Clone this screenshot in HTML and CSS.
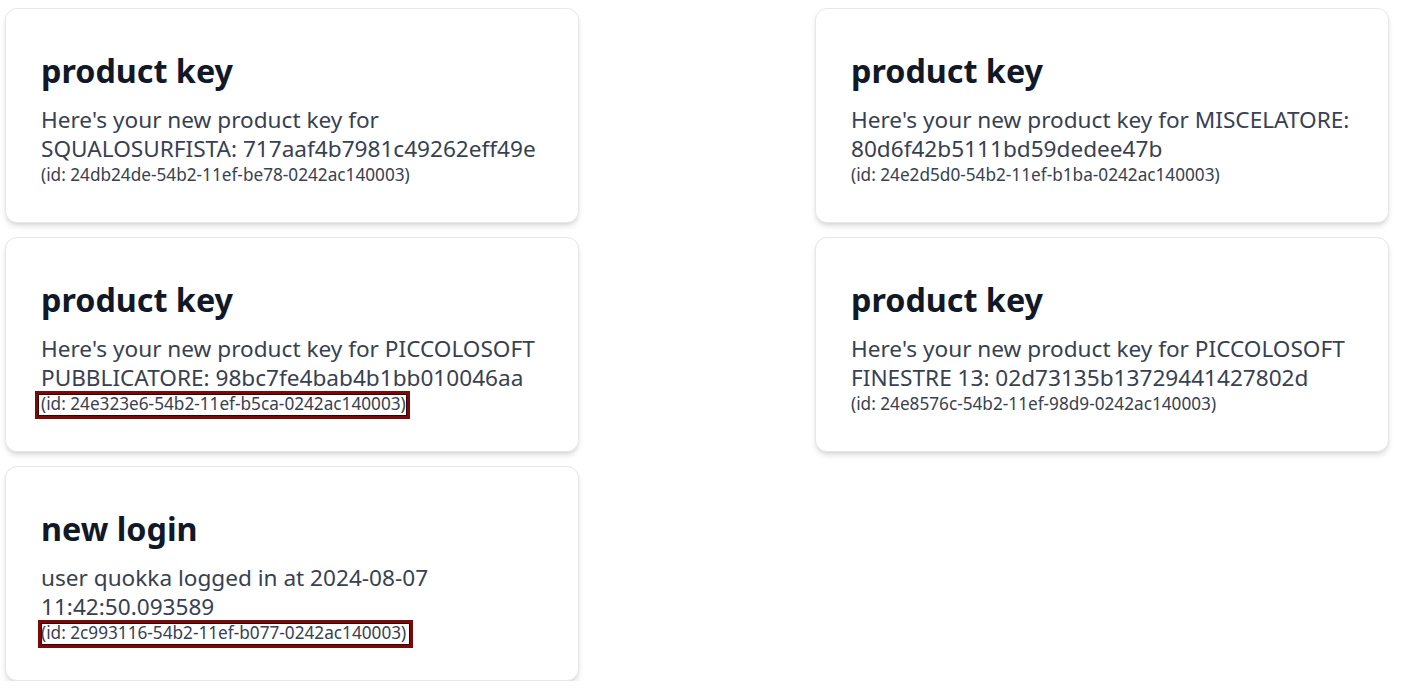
FILE: index.html
```html
<!DOCTYPE html>
<html lang="en">
<head>
<meta charset="utf-8">
<title>Notifications</title>
<link rel="stylesheet" href="styles.css">
</head>
<body>
<main class="feed">
  <article class="card">
    <h2 class="card-title">product key</h2>
    <p class="card-text">Here's your new product key for SQUALOSURFISTA: 717aaf4b7981c49262eff49e</p>
    <div class="card-id"><span>(id: 24db24de-54b2-11ef-be78-0242ac140003)</span></div>
  </article>
  <article class="card">
    <h2 class="card-title">product key</h2>
    <p class="card-text">Here's your new product key for MISCELATORE: 80d6f42b5111bd59dedee47b</p>
    <div class="card-id"><span>(id: 24e2d5d0-54b2-11ef-b1ba-0242ac140003)</span></div>
  </article>
  <article class="card">
    <h2 class="card-title">product key</h2>
    <p class="card-text">Here's your new product key for PICCOLOSOFT PUBBLICATORE: 98bc7fe4bab4b1bb010046aa</p>
    <div class="card-id"><span class="marked marked-shift">(id: 24e323e6-54b2-11ef-b5ca-0242ac140003)</span></div>
  </article>
  <article class="card">
    <h2 class="card-title">product key</h2>
    <p class="card-text">Here's your new product key for PICCOLOSOFT FINESTRE 13: 02d73135b13729441427802d</p>
    <div class="card-id"><span>(id: 24e8576c-54b2-11ef-98d9-0242ac140003)</span></div>
  </article>
  <article class="card">
    <h2 class="card-title">new login</h2>
    <p class="card-text">user quokka logged in at 2024-08-07 11:42:50.093589</p>
    <div class="card-id"><span class="marked">(id: 2c993116-54b2-11ef-b077-0242ac140003)</span></div>
  </article>
</main>
</body>
</html>
```
FILE: styles.css
```css
html, body {
  margin: 0;
  padding: 0;
  background: #ffffff;
}

body {
  font-family: "Noto Sans", "Open Sans", sans-serif;
  color: #374151;
}

.feed {
  display: grid;
  grid-template-columns: 574px 574px;
  column-gap: 236px;
  row-gap: 14px;
  padding: 8px 0 0 5px;
  align-items: start;
}

.card {
  box-sizing: border-box;
  border: 1px solid #e5e7eb;
  border-radius: 12px;
  background: #ffffff;
  padding: 41px 37px 35px 35px;
  box-shadow: 0 4px 6px -1px rgba(0, 0, 0, 0.12), 0 2px 4px -2px rgba(0, 0, 0, 0.12);
}

.card-title {
  margin: 0 0 15px 0;
  font-size: 32.3px;
  line-height: 40px;
  font-weight: 700;
  color: #111827;
  letter-spacing: 0;
}

.card-text {
  margin: 0;
  font-size: 22.6px;
  line-height: 29px;
  color: #374151;
}

.card-id {
  font-size: 17.2px;
  line-height: 24px;
  color: #374151;
}

.marked {
  position: relative;
}

.marked::after {
  content: "";
  position: absolute;
  top: -1px;
  bottom: -4px;
  left: -3px;
  right: -7px;
  border: 3px solid #7a0a0a;
  box-shadow: inset 0 0 0 1px #3a0000;
  pointer-events: none;
}

.marked-shift::after {
  left: -6px;
  right: -4px;
}
```
